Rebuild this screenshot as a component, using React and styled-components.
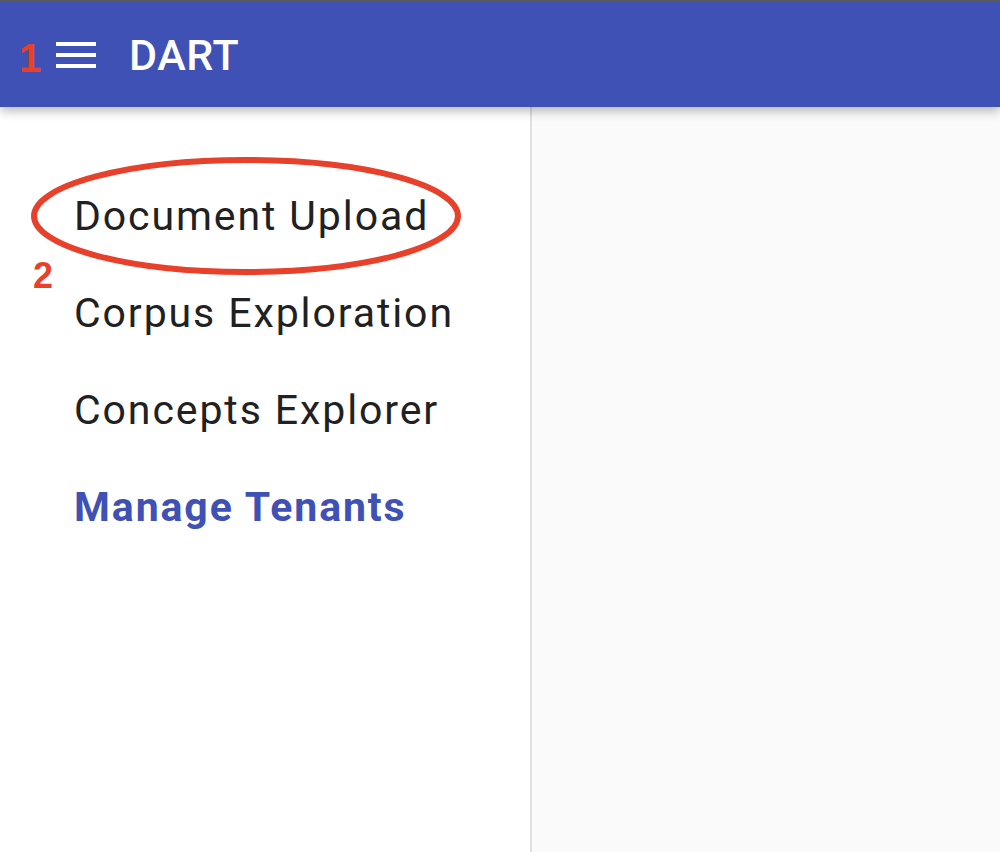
import React from 'react';
import styled, { createGlobalStyle } from 'styled-components';

const GlobalStyle = createGlobalStyle`
  html, body {
    margin: 0;
    padding: 0;
    background: #ffffff;
  }
  body {
    font-family: Roboto, "Liberation Sans", Arial, sans-serif;
  }
`;

const Page = styled.div`
  position: relative;
  height: 852px;
  display: flex;
  flex-direction: column;
  overflow: hidden;
`;

const AppBar = styled.header`
  position: relative;
  z-index: 2;
  height: 105px;
  flex-shrink: 0;
  border-top: 2px solid #5b5b5f;
  background: #3f51b5;
  display: flex;
  align-items: center;
  padding-left: 56px;
  box-shadow: 0 4px 10px rgba(0, 0, 0, 0.28);
`;

const MenuButton = styled.button`
  background: none;
  border: none;
  padding: 0;
  margin: 0 33px 0 0;
  display: flex;
  cursor: pointer;
`;

const Title = styled.h1`
  margin: 0;
  color: #ffffff;
  font-size: 43px;
  font-weight: 500;
  letter-spacing: 0.6px;
`;

const Body = styled.div`
  flex: 1;
  display: flex;
  min-height: 0;
`;

const Sidebar = styled.nav`
  width: 530px;
  flex-shrink: 0;
  background: #ffffff;
  border-right: 2px solid #e0e0e0;
  padding-top: 61px;
  display: flex;
  flex-direction: column;
`;

const NavItem = styled.a`
  display: block;
  padding-left: 74px;
  height: 97px;
  line-height: 97px;
  font-size: 41px;
  letter-spacing: 1.9px;
  font-weight: ${(p) => (p.$active ? 700 : 400)};
  color: ${(p) => (p.$active ? '#3f51b5' : '#212121')};
  text-decoration: none;
  white-space: nowrap;
  cursor: pointer;
`;

const Main = styled.main`
  flex: 1;
  background: #fafafa;
`;

const Marker = styled.span`
  position: absolute;
  left: ${(p) => p.$x}px;
  top: ${(p) => p.$y}px;
  z-index: 3;
  color: #e8412b;
  font-family: "Liberation Sans", Arial, sans-serif;
  font-weight: 700;
  font-size: ${(p) => p.$size}px;
  line-height: 1;
`;

const Highlight = styled.svg`
  position: absolute;
  left: 29px;
  top: 154px;
  z-index: 3;
  pointer-events: none;
`;

const MenuIcon = () => (
  <svg width="40" height="26" viewBox="0 0 40 26">
    <rect x="0" y="0" width="40" height="4" fill="#ffffff" />
    <rect x="0" y="11" width="40" height="4" fill="#ffffff" />
    <rect x="0" y="22" width="40" height="4" fill="#ffffff" />
  </svg>
);

const items = [
  { label: 'Document Upload' },
  { label: 'Corpus Exploration' },
  { label: 'Concepts Explorer' },
  { label: 'Manage Tenants', active: true },
];

export default function App() {
  return (
    <>
      <GlobalStyle />
      <Page>
        <AppBar>
          <MenuButton aria-label="menu">
            <MenuIcon />
          </MenuButton>
          <Title>DART</Title>
        </AppBar>
        <Body>
          <Sidebar>
            {items.map((item) => (
              <NavItem key={item.label} $active={item.active}>
                {item.label}
              </NavItem>
            ))}
          </Sidebar>
          <Main />
        </Body>

        <Marker $x={19} $y={38} $size={40}>1</Marker>
        <Marker $x={33} $y={258} $size={36}>2</Marker>
        <Highlight width="436" height="126" viewBox="0 0 436 126">
          <ellipse cx="217" cy="62" rx="212" ry="56" fill="none" stroke="#e8412b" strokeWidth="6" />
        </Highlight>
      </Page>
    </>
  );
}
